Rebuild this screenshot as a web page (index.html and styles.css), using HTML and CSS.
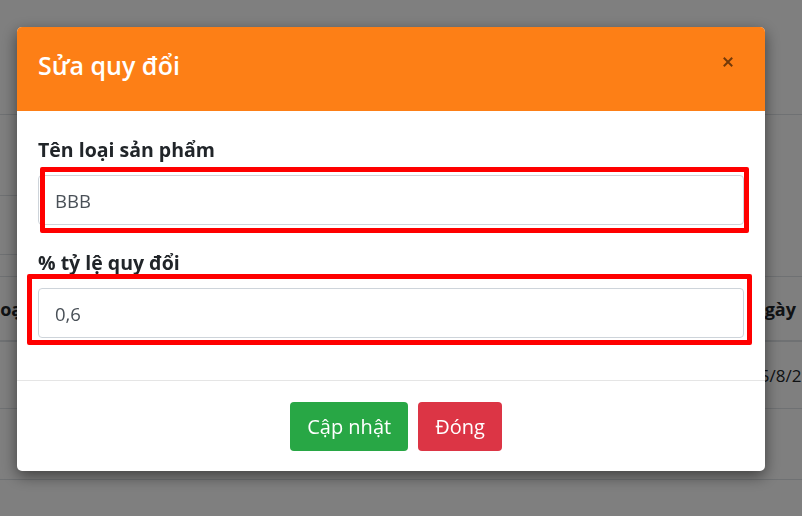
FILE: index.html
```html
<!DOCTYPE html>
<html lang="vi">
<head>
<meta charset="utf-8">
<title>Sửa quy đổi</title>
<link rel="stylesheet" href="styles.css">
</head>
<body>
<div class="page">
  <div class="top"></div>
  <div class="filters">
    <div class="filter-col">
      <div class="f-row f1"></div>
      <div class="f-row f2"></div>
    </div>
  </div>
  <div class="table">
    <div class="thead">
      <span class="cell cell-left">Loại</span>
      <span class="cell cell-right">Ngày</span>
    </div>
    <div class="tr r1">
      <span class="cell"></span>
      <span class="cell cell-right">25/8/2</span>
    </div>
    <div class="tr r2"></div>
    <div class="tr r3"></div>
  </div>
</div>

<div class="backdrop"></div>

<div class="modal">
  <div class="modal-header">
    <h5 class="modal-title">Sửa quy đổi</h5>
    <button class="close" type="button" aria-label="Close">
      <svg width="10" height="10" viewBox="0 0 10 10"><path d="M1.5 1.5 L8.5 8.5 M8.5 1.5 L1.5 8.5" stroke="currentColor" stroke-width="2" stroke-linecap="square"/></svg>
    </button>
  </div>
  <div class="modal-body">
    <div class="form-group">
      <label class="form-label">Tên loại sản phẩm</label>
      <input class="form-control" type="text" value="BBB">
    </div>
    <div class="form-group">
      <label class="form-label">% tỷ lệ quy đổi</label>
      <input class="form-control" type="text" value="0,6">
    </div>
    <div class="mark mark1"></div>
    <div class="mark mark2"></div>
  </div>
  <div class="modal-footer">
    <button class="btn btn-success" type="button">Cập nhật</button>
    <button class="btn btn-danger" type="button">Đóng</button>
  </div>
</div>
</body>
</html>
```

FILE: styles.css
```css
* { box-sizing: border-box; }

html, body {
  margin: 0;
  padding: 0;
  height: 100%;
  overflow: hidden;
}

body {
  font-family: "Open Sans", "Noto Sans", "DejaVu Sans", sans-serif;
  color: #212529;
  background: #ffffff;
}

/* background page */
.page {
  width: 802px;
}

.top {
  height: 115px;
  border-bottom: 1px solid #dee2e6;
}

.filters {
  height: 162px;
  border-bottom: 1px solid #dee2e6;
}

.filter-col {
  width: 30px;
}

.f-row {
  border-bottom: 1px solid #dee2e6;
}

.f1 { height: 81px; }
.f2 { height: 59px; }

.thead,
.tr {
  display: grid;
  grid-template-columns: 750px 52px;
  align-items: center;
  white-space: nowrap;
  font-size: 17px;
}

.thead {
  height: 65px;
  border-bottom: 2px solid #dee2e6;
  font-weight: 700;
  font-size: 18px;
}

.cell-left {
  margin-left: -10px;
}

.tr {
  border-bottom: 1px solid #dee2e6;
}

.r1 { height: 67px; }
.r2 { height: 71px; }
.r3 { height: 60px; border-bottom: none; }

.backdrop {
  position: fixed;
  inset: 0;
  background: rgba(0, 0, 0, 0.5);
}

/* modal */
.modal {
  position: fixed;
  top: 27px;
  left: 17px;
  width: 748px;
  background: #ffffff;
  border-radius: 5px;
  overflow: hidden;
  box-shadow: 0 5px 15px rgba(0, 0, 0, 0.5);
}

.modal-header {
  height: 84px;
  background: #fd7f16;
  display: flex;
  align-items: center;
  justify-content: space-between;
  padding: 0 31px 8px 21px;
}

.modal-title {
  margin: 0;
  color: #ffffff;
  font-size: 25px;
  font-weight: 600;
  line-height: 1.2;
}

.close {
  border: 0;
  background: transparent;
  padding: 0;
  width: 12px;
  height: 12px;
  display: flex;
  align-items: center;
  justify-content: center;
  color: rgba(0, 0, 0, 0.55);
  margin-bottom: 6px;
}

.modal-body {
  position: relative;
  padding: 27px 21px 16px;
}

.form-group {
  margin-bottom: 26px;
}

.form-label {
  display: block;
  font-size: 19.5px;
  font-weight: 700;
  line-height: 24px;
  margin-bottom: 13px;
  color: #212529;
}

.form-control {
  display: block;
  width: 100%;
  height: 50px;
  padding: 0 16px;
  border: 1px solid #ced4da;
  border-radius: 4px;
  font-family: inherit;
  font-size: 18.5px;
  color: #495057;
  background: #ffffff;
}

.mark {
  position: absolute;
  border: 5px solid #ff0000;
  border-radius: 2px;
}

.mark1 {
  left: 23px;
  top: 56px;
  width: 709px;
  height: 66px;
}

.mark2 {
  left: 10px;
  top: 163px;
  width: 725px;
  height: 71px;
}

.modal-footer {
  border-top: 1px solid #e5e5e5;
  display: flex;
  justify-content: center;
  gap: 10px;
  padding: 21px 0 20px 10px;
}

.btn {
  height: 49px;
  padding: 0 17px;
  border: 0;
  border-radius: 4px;
  font-family: inherit;
  font-size: 20px;
  color: #ffffff;
}

.btn-success { background: #28a745; }
.btn-danger { background: #dc3545; }
```
